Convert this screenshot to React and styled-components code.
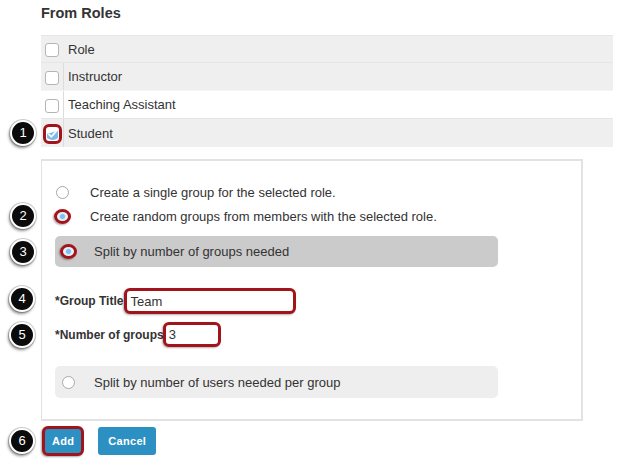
import React from "react";
import styled, { createGlobalStyle, css } from "styled-components";

const GlobalStyle = createGlobalStyle`
  html, body { margin: 0; padding: 0; background: #fff; }
  body { font-family: "Liberation Sans", Arial, sans-serif; color: #333; }
`;

const RED = "#a3131c";

const Page = styled.div`
  width: 640px;
  height: 466px;
  padding-left: 41px;
  box-sizing: border-box;
  overflow: hidden;
`;

const Heading = styled.h3`
  margin: 0;
  padding-top: 5px;
  height: 22px;
  line-height: 16px;
  font-size: 14.5px;
  font-weight: bold;
  color: #333;
`;

const Table = styled.div`
  margin-top: 8px;
  width: 572px;
  display: flex;
  flex-direction: column;
`;

const Row = styled.div`
  position: relative;
  display: flex;
  align-items: center;
  height: ${(p) => p.$h || 28}px;
  background: ${(p) => (p.$shade ? "#efefef" : "#fff")};
  border-top: 1px solid ${(p) => (p.$shade ? "#e6e6e6" : "#f4f4f4")};
  box-sizing: border-box;
`;

const CheckCell = styled.div`
  width: 23px;
  height: 100%;
  display: flex;
  align-items: center;
  justify-content: center;
  box-sizing: border-box;
  border-right: 1px solid ${(p) => (p.$noLine ? "transparent" : "#dcdcdc")};
`;

const Box = styled.span`
  display: block;
  width: 14px;
  height: 14px;
  background: #fff;
  border: 1px solid #b5b5b5;
  border-radius: 3px;
  box-sizing: border-box;
  margin-top: 2px;
`;

const CellLabel = styled.span`
  padding-left: 4px;
  font-size: 13px;
  color: #333;
`;

const Badge = styled.span`
  position: absolute;
  left: ${(p) => p.$x}px;
  top: 50%;
  margin-top: ${(p) => (p.$dy || 0) - 13}px;
  width: 22px;
  height: 22px;
  border-radius: 50%;
  background: #0b0b0b;
  border: 2px solid #fff;
  box-shadow: -1px 2px 3px rgba(0, 0, 0, 0.45), 0 0 0 1px #d0d0d0;
  color: #fff;
  font-size: 13px;
  line-height: 22px;
  text-align: center;
  font-family: "Liberation Sans", Arial, sans-serif;
`;

const Panel = styled.div`
  margin-top: 12px;
  width: 542px;
  height: 262px;
  box-sizing: border-box;
  border: 2px solid #e2e2e2;
  border-left-width: 1px;
  padding: 19px 0 0 13px;
`;

const Option = styled.div`
  position: relative;
  display: flex;
  align-items: center;
  height: 24px;
  font-size: 13px;
  color: #333;
  ${(p) =>
    p.$boxed &&
    css`
      width: 443px;
      height: ${p.$h || 31}px;
      margin-top: ${p.$mt || 0}px;
      border-radius: 5px;
      background: ${p.$bg};
      padding-left: 6px;
      box-sizing: border-box;
    `}
`;

const RadioSlot = styled.span`
  width: 14px;
  display: flex;
  align-items: center;
  justify-content: center;
  flex-shrink: 0;
  margin-right: ${(p) => (p.$boxed ? 19 : 21)}px;
`;

const Radio = styled.span`
  display: block;
  width: 13px;
  height: 13px;
  border-radius: 50%;
  border: 1px solid #a9a9a9;
  background: #fff;
  box-sizing: border-box;
  flex-shrink: 0;
`;

const RadioOn = styled.span`
  display: block;
  width: 17px;
  height: 15px;
  flex-shrink: 0;
  border-radius: 50%;
  border: 3px solid ${RED};
  box-sizing: border-box;
  background: radial-gradient(circle at 50% 50%, #7cc0ee 0 2px, #d7ebf8 3px, #fff 6px);
  box-shadow: -1px 1px 2px rgba(0, 0, 0, 0.35);
`;

const FieldRow = styled.div`
  position: relative;
  display: flex;
  align-items: center;
  margin-top: ${(p) => p.$mt}px;
  height: ${(p) => p.$h}px;
`;

const FieldLabel = styled.span`
  font-size: 12px;
  font-weight: bold;
  color: #333;
  white-space: nowrap;
`;

const Input = styled.div`
  width: ${(p) => p.$w}px;
  height: 100%;
  margin-left: ${(p) => p.$ml || 0}px;
  border: 3px solid ${RED};
  border-radius: 6px;
  box-sizing: border-box;
  background: #fff;
  box-shadow: -1px 1px 2px rgba(0, 0, 0, 0.3);
  font-size: 13px;
  color: #333;
  display: flex;
  align-items: center;
  padding-left: 3px;
`;

const Actions = styled.div`
  position: relative;
  display: flex;
  align-items: center;
  gap: 14px;
  margin-top: 5px;
  margin-left: 1px;
`;

const Button = styled.button`
  height: ${(p) => (p.$hl ? 30 : 28)}px;
  padding: 0 ${(p) => (p.$hl ? 7 : 10)}px;
  border-radius: ${(p) => (p.$hl ? 6 : 3)}px;
  border: ${(p) => (p.$hl ? `3px solid ${RED}` : "none")};
  background: #2d90c3;
  color: #fff;
  font-family: "Liberation Sans", Arial, sans-serif;
  font-size: 11px;
  font-weight: bold;
  letter-spacing: 0.3px;
  box-shadow: ${(p) => (p.$hl ? "-1px 1px 2px rgba(0,0,0,0.35)" : "none")};
  cursor: pointer;
`;

function CheckedBox() {
  return (
    <svg width="19" height="20" viewBox="0 0 19 20" style={{ marginTop: 2 }}>
      <rect x="1.5" y="1.5" width="16" height="17" rx="4.5" fill="#fff" stroke={RED} strokeWidth="3" />
      <path d="M4 10 L15 6.5 L15 14 Q9.5 18 4 14 Z" fill="#7ebce8" />
      <path d="M5.5 10 L8.3 12.8 L14 6.5" fill="none" stroke="#fff" strokeWidth="1.7" />
    </svg>
  );
}

const roles = [
  { name: "Role", shade: true, h: 27, noLine: true },
  { name: "Instructor", shade: true, h: 28 },
  { name: "Teaching Assistant", shade: false, h: 28 },
  { name: "Student", shade: true, h: 29, checked: true, badge: 1 },
];

export default function App() {
  return (
    <Page>
      <GlobalStyle />
      <Heading>From Roles</Heading>
      <Table>
        {roles.map((r) => (
          <Row key={r.name} $shade={r.shade} $h={r.h}>
            {r.badge && <Badge $x={-31}>{r.badge}</Badge>}
            <CheckCell $noLine={r.noLine}>{r.checked ? <CheckedBox /> : <Box />}</CheckCell>
            <CellLabel>{r.name}</CellLabel>
          </Row>
        ))}
      </Table>
      <Panel>
        <Option>
          <RadioSlot>
            <Radio />
          </RadioSlot>
          Create a single group for the selected role.
        </Option>
        <Option>
          <Badge $x={-45}>2</Badge>
          <RadioSlot>
            <RadioOn />
          </RadioSlot>
          Create random groups from members with the selected role.
        </Option>
        <Option $boxed $bg="#cbcbcb" $mt={8}>
          <Badge $x={-45}>3</Badge>
          <RadioSlot $boxed>
            <RadioOn />
          </RadioSlot>
          Split by number of groups needed
        </Option>
        <FieldRow $mt={21} $h={26}>
          <Badge $x={-46} $dy={-2}>4</Badge>
          <FieldLabel>*Group Title</FieldLabel>
          <Input $w={172} $ml={1}>Team</Input>
        </FieldRow>
        <FieldRow $mt={8} $h={25}>
          <Badge $x={-46}>5</Badge>
          <FieldLabel>*Number of groups</FieldLabel>
          <Input $w={58} $ml={-1}>3</Input>
        </FieldRow>
        <Option $boxed $bg="#eeeeee" $mt={19} $h={32}>
          <RadioSlot $boxed>
            <Radio />
          </RadioSlot>
          Split by number of users needed per group
        </Option>
      </Panel>
      <Actions>
        <Badge $x={-33}>6</Badge>
        <Button $hl>Add</Button>
        <Button>Cancel</Button>
      </Actions>
    </Page>
  );
}
